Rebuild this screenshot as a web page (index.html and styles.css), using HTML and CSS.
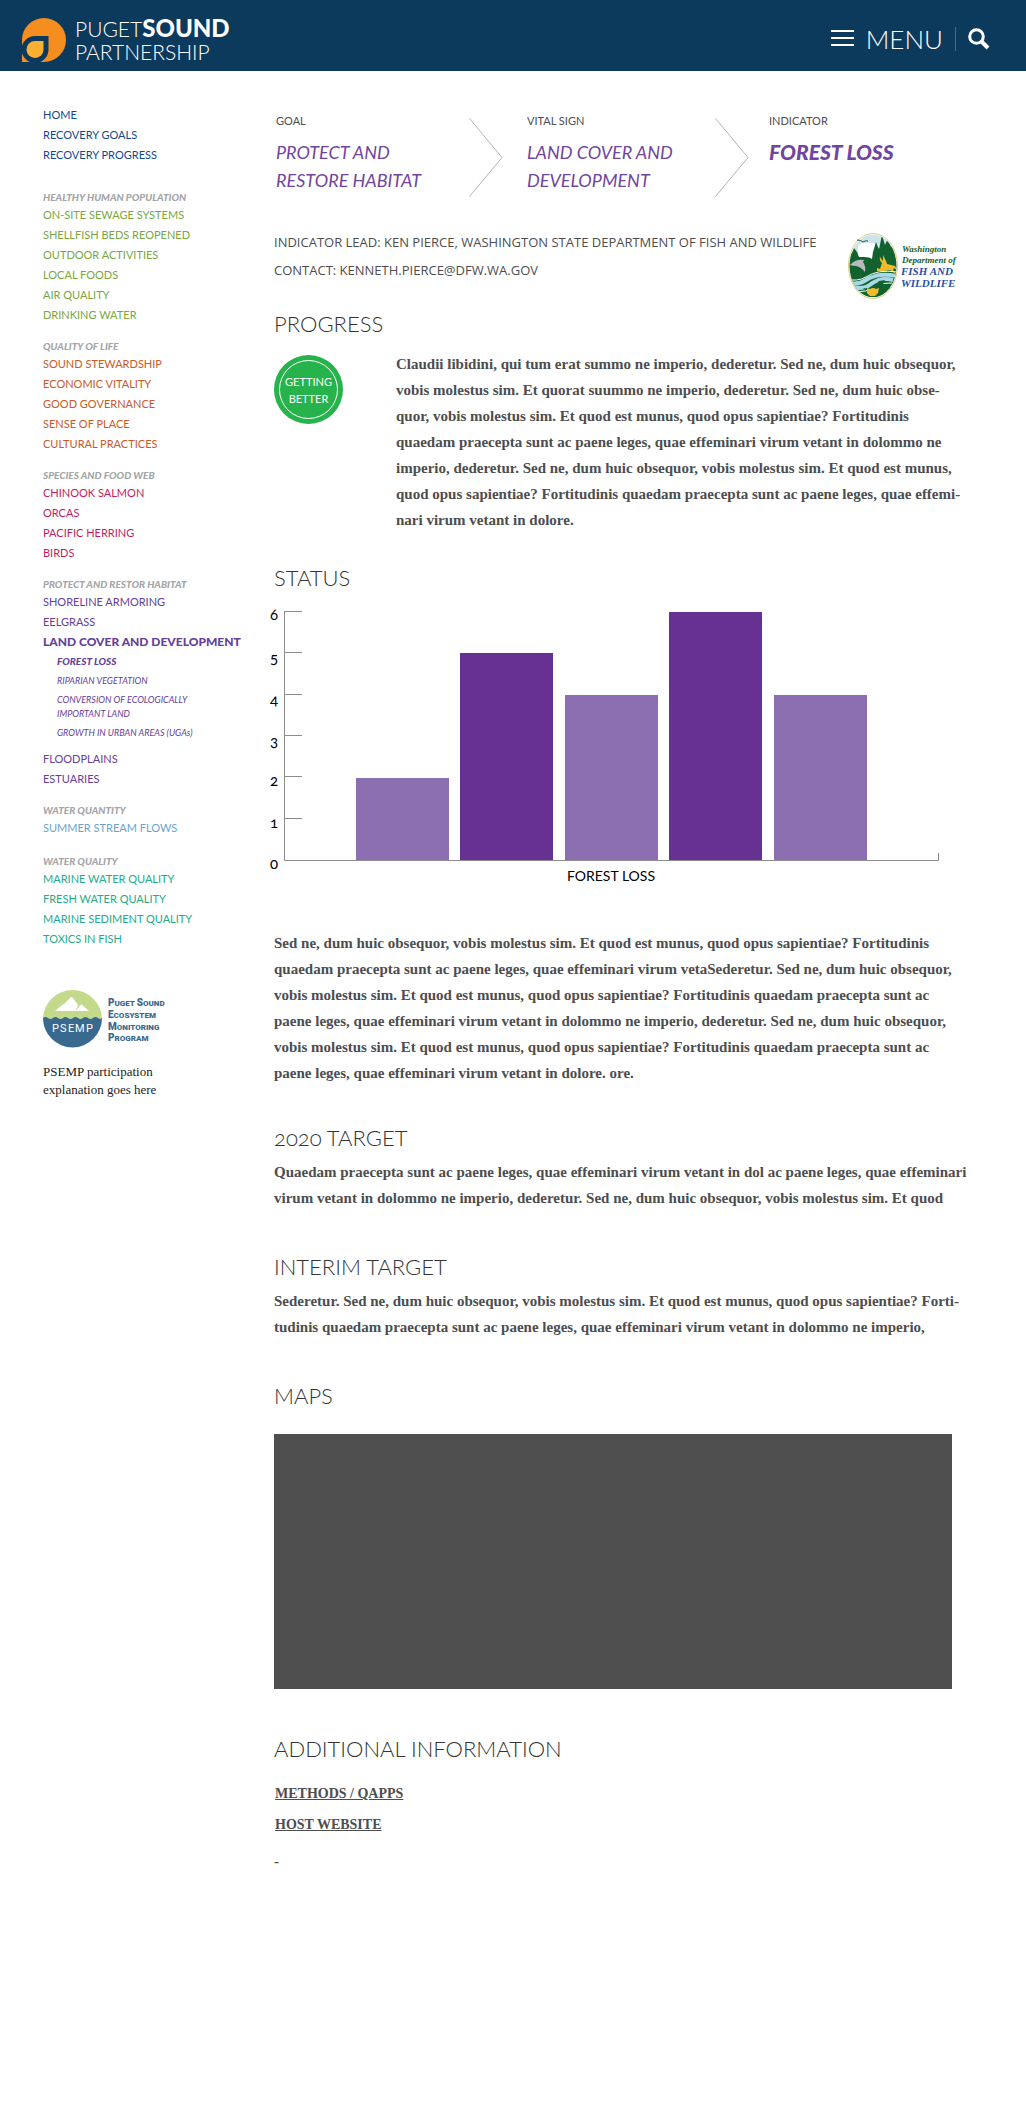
FILE: index.html
```
<!DOCTYPE html>
<html lang="en">
<head>
<meta charset="utf-8">
<meta name="viewport" content="width=device-width, initial-scale=1">
<title>Forest Loss – Puget Sound Partnership</title>
<link rel="stylesheet" href="styles.css">
</head>
<body>
<header class="site-header">
  <a class="brand" href="#">
    <svg class="brand-mark" width="44" height="44" viewBox="0 0 44 44" aria-hidden="true">
      <path fill="#f68d1f" d="M0 44V22A22 22 0 1 1 22 44Z"/>
      <path fill="#0c3a5c" d="M26.500 18V31.500A13.500 13.500 0 1 1 13 18Z"/>
      <path fill="#fbb034" d="M21.500 23V31.500A8.500 8.500 0 1 1 13 23Z"/>
    </svg>
    <span class="brand-name">PUGET<b>SOUND</b><br>PARTNERSHIP</span>
  </a>
  <div class="header-tools">
    <button class="menu-button" type="button">
      <svg width="23" height="17" viewBox="0 0 23 17" aria-hidden="true"><path d="M0 1h23M0 8h23M0 15h23" stroke="#fff" stroke-width="2"/></svg>
      MENU
    </button>
    <button class="search-button" type="button" aria-label="Search">
      <svg width="22" height="22" viewBox="0 0 22 22" fill="none" stroke="#fff" aria-hidden="true"><circle cx="8.500" cy="8.500" r="6.800" stroke-width="3"/><path d="M13.500 13.500L20 20" stroke-width="4"/></svg>
    </button>
  </div>
</header>

<div class="page">
  <nav class="sidebar" aria-label="Vital signs">
    <ul class="group blue">
      <li><a href="#">HOME</a></li>
      <li><a href="#">RECOVERY GOALS</a></li>
      <li><a href="#">RECOVERY PROGRESS</a></li>
    </ul>
    <h2 class="group-title first">HEALTHY HUMAN POPULATION</h2>
    <ul class="group green">
      <li><a href="#">ON-SITE SEWAGE SYSTEMS</a></li>
      <li><a href="#">SHELLFISH BEDS REOPENED</a></li>
      <li><a href="#">OUTDOOR ACTIVITIES</a></li>
      <li><a href="#">LOCAL FOODS</a></li>
      <li><a href="#">AIR QUALITY</a></li>
      <li><a href="#">DRINKING WATER</a></li>
    </ul>
    <h2 class="group-title">QUALITY OF LIFE</h2>
    <ul class="group orange">
      <li><a href="#">SOUND STEWARDSHIP</a></li>
      <li><a href="#">ECONOMIC VITALITY</a></li>
      <li><a href="#">GOOD GOVERNANCE</a></li>
      <li><a href="#">SENSE OF PLACE</a></li>
      <li><a href="#">CULTURAL PRACTICES</a></li>
    </ul>
    <h2 class="group-title">SPECIES AND FOOD WEB</h2>
    <ul class="group magenta">
      <li><a href="#">CHINOOK SALMON</a></li>
      <li><a href="#">ORCAS</a></li>
      <li><a href="#">PACIFIC HERRING</a></li>
      <li><a href="#">BIRDS</a></li>
    </ul>
    <h2 class="group-title">PROTECT AND RESTOR HABITAT</h2>
    <ul class="group purple">
      <li><a href="#">SHORELINE ARMORING</a></li>
      <li><a href="#">EELGRASS</a></li>
      <li><a class="current" href="#">LAND COVER AND DEVELOPMENT</a>
        <ul class="subgroup">
          <li><a class="current-sub" href="#" aria-current="page">FOREST LOSS</a></li>
          <li><a href="#">RIPARIAN VEGETATION</a></li>
          <li><a href="#">CONVERSION OF ECOLOGICALLY<br>IMPORTANT LAND</a></li>
          <li><a href="#">GROWTH IN URBAN AREAS (UGAs)</a></li>
        </ul>
      </li>
      <li><a href="#">FLOODPLAINS</a></li>
      <li><a href="#">ESTUARIES</a></li>
    </ul>
    <h2 class="group-title">WATER QUANTITY</h2>
    <ul class="group sky">
      <li><a href="#">SUMMER STREAM FLOWS</a></li>
    </ul>
    <h2 class="group-title water">WATER QUALITY</h2>
    <ul class="group teal">
      <li><a href="#">MARINE WATER QUALITY</a></li>
      <li><a href="#">FRESH WATER QUALITY</a></li>
      <li><a href="#">MARINE SEDIMENT QUALITY</a></li>
      <li><a href="#">TOXICS IN FISH</a></li>
    </ul>
    <svg class="psemp-logo" width="130" height="59" viewBox="0 0 130 59" role="img" aria-label="Puget Sound Ecosystem Monitoring Program">
      <path fill="#c3d98b" d="M0 29.500a29.500 29.500 0 0 1 59 0Z"/>
      <path fill="#39698f" d="M0 28q2.500-2 5 0t5 0 5 0 5 0 5 0 5 0 5 0 5 0 5 0 5 0 5 0 4 0A29.500 29.500 0 0 1 0 28Z"/>
      <path fill="#fff" d="M12 21l7-6 2-1 7-7 2 1 5 7-2 4 5-5 8 7Z"/>
      <path d="M33 20l5-6" stroke="#c3d98b"/>
      <g class="psemp-initials"><text x="9" y="42">P</text><text x="17" y="42">S</text><text x="25" y="42">E</text><text x="32" y="42">M</text><text x="43" y="42">P</text></g>
      <g class="psemp-name">
        <text x="65" y="16"><tspan class="cap">P</tspan>UGET <tspan class="cap">S</tspan>OUND</text>
        <text x="65" y="28"><tspan class="cap">E</tspan>COSYSTEM</text>
        <text x="65" y="40"><tspan class="cap">M</tspan>ONITORING</text>
        <text x="65" y="51"><tspan class="cap">P</tspan>ROGRAM</text>
      </g>
    </svg>
    <p class="psemp-note">PSEMP participation<br>explanation goes here</p>
  </nav>

  <main class="content">
    <div class="trail">
      <div class="trail-step goal"><span class="trail-label">GOAL</span><a class="trail-title" href="#">PROTECT AND<br>RESTORE HABITAT</a></div>
      <svg class="chevron" width="34" height="79" viewBox="0 0 34 79" aria-hidden="true"><path d="M.5.500l32.500 39-32.500 39" fill="none" stroke="#b5b5b5"/></svg>
      <div class="trail-step sign"><span class="trail-label">VITAL SIGN</span><a class="trail-title" href="#">LAND COVER AND<br>DEVELOPMENT</a></div>
      <svg class="chevron" width="34" height="79" viewBox="0 0 34 79" aria-hidden="true"><path d="M.5.500l32.500 39-32.500 39" fill="none" stroke="#b5b5b5"/></svg>
      <div class="trail-step"><span class="trail-label">INDICATOR</span><h1 class="trail-title strong">FOREST LOSS</h1></div>
    </div>

    <div class="lead">
      <p>INDICATOR LEAD: KEN PIERCE, WASHINGTON STATE DEPARTMENT OF FISH AND WILDLIFE<br>CONTACT: KENNETH.PIERCE@DFW.WA.GOV</p>
      <svg class="wdfw" width="114" height="66" viewBox="0 0 114 66" role="img" aria-label="Washington Department of Fish and Wildlife">
        <defs><clipPath id="seal"><ellipse cx="25" cy="33" rx="23.500" ry="31.500"/></clipPath></defs>
        <ellipse cx="25" cy="33" rx="24.500" ry="32.500" fill="#fff" stroke="#d9cf86"/>
        <g clip-path="url(#seal)">
          <path fill="#cfe4ea" d="M0 0h50v22H0z"/>
          <path fill="#fff" d="M10 13q5-4 14-3 8 0 8 6v10H10z"/>
          <path fill="#12622f" d="M0 22l4-2 2-5 3 4 2 5 5 0q6 0 8 2l1-7 3-10 3 7 3-14 3 10 3-7 3 9 2-4 5 6v48H0z"/>
          <path fill="#b9babd" d="M2 32q5-6 14-5l-1 2q3 4 2 10-4-5-9-6-3 0-6-1z"/>
          <path fill="#f2bb2c" d="M29 35l3 1 2-6q-3-3-2-6l3 4 0-6 3 6 1 3 8 2 3 5-4-3-1 2 3 4-6-4-6 1-7 0z"/>
          <path fill="none" stroke="#a9d9e6" stroke-width="4" d="M-2 49q11 4 20-2 12-8 31-4M3 54q13 3 20-3 10-7 22-4"/>
          <path fill="none" stroke="#fff" d="M-2 46q11 3 20-2 12-8 31-5M6 58q13 2 20-4 8-5 18-4"/>
          <path fill="#12622f" d="M14 55q10 2 17-7l6-1q-4 10-10 13z"/>
          <path fill="#f2bb2c" d="M19 55l3 1q3-2 6 0l3-1-1 5-3 3h-5l-3-3z"/>
        </g>
        <path d="M9 7q4 0 6 2 3-2 5-1" fill="none" stroke="#2a4d5c"/>
        <g class="wdfw-name"><text x="54" y="19">Washington</text><text x="54" y="30">Department of</text></g>
        <g class="wdfw-strong"><text x="53" y="42">FISH AND</text><text x="53" y="54">WILDLIFE</text></g>
      </svg>
    </div>

    <section class="progress">
      <h2>PROGRESS</h2>
      <div class="progress-row">
        <div class="badge"><span>GETTING<br>BETTER</span></div>
        <p>Claudii libidini, qui tum erat summo ne imperio, dederetur. Sed ne, dum huic obsequor,<br>vobis molestus sim. Et quorat suummo ne imperio, dederetur. Sed ne, dum huic obse-<br>quor, vobis molestus sim. Et quod est munus, quod opus sapientiae? Fortitudinis<br>quaedam praecepta sunt ac paene leges, quae effeminari virum vetant in dolommo ne<br>imperio, dederetur. Sed ne, dum huic obsequor, vobis molestus sim. Et quod est munus,<br>quod opus sapientiae? Fortitudinis quaedam praecepta sunt ac paene leges, quae effemi-<br>nari virum vetant in dolore.</p>
      </div>
    </section>

    <section class="status">
      <h2>STATUS</h2>
      <svg class="chart" width="666" height="280" viewBox="0 0 666 280" role="img" aria-label="Forest loss: 2, 5, 4, 6, 4">
        <path fill="none" stroke="#8c8c8c" d="M10.500 7V256.500H664.500V249M11 7.500h17M11 48.500h17M11 90.500h17M11 131.500h17M11 172.500h17M11 214.500h17"/>
        <g fill="#8c6fb0"><rect x="82" y="174" width="93" height="82"/><rect x="291" y="91" width="93" height="165"/><rect x="500" y="91" width="93" height="165"/></g>
        <g fill="#663192"><rect x="186" y="49" width="93" height="207"/><rect x="395" y="8" width="93" height="248"/></g>
        <g class="chart-ticks"><text x="0" y="16">6</text><text x="0" y="59">5</text><text x="0" y="101">4</text><text x="0" y="142">3</text><text x="0" y="182">2</text><text x="0" y="224">1</text><text x="0" y="265">0</text></g>
        <text class="chart-label" x="337" y="277">FOREST LOSS</text>
      </svg>
      <p>Sed ne, dum huic obsequor, vobis molestus sim. Et quod est munus, quod opus sapientiae? Fortitudinis<br>quaedam praecepta sunt ac paene leges, quae effeminari virum vetaSederetur. Sed ne, dum huic obsequor,<br>vobis molestus sim. Et quod est munus, quod opus sapientiae? Fortitudinis quaedam praecepta sunt ac<br>paene leges, quae effeminari virum vetant in dolommo ne imperio, dederetur. Sed ne, dum huic obsequor,<br>vobis molestus sim. Et quod est munus, quod opus sapientiae? Fortitudinis quaedam praecepta sunt ac<br>paene leges, quae effeminari virum vetant in dolore. ore.</p>
    </section>

    <section class="target">
      <h2>2020 TARGET</h2>
      <p>Quaedam praecepta sunt ac paene leges, quae effeminari virum vetant in dol ac paene leges, quae effeminari<br>virum vetant in dolommo ne imperio, dederetur. Sed ne, dum huic obsequor, vobis molestus sim. Et quod</p>
    </section>

    <section class="target">
      <h2>INTERIM TARGET</h2>
      <p>Sederetur. Sed ne, dum huic obsequor, vobis molestus sim. Et quod est munus, quod opus sapientiae? Forti-<br>tudinis quaedam praecepta sunt ac paene leges, quae effeminari virum vetant in dolommo ne imperio,</p>
    </section>

    <section class="maps">
      <h2>MAPS</h2>
      <div class="map"></div>
    </section>

    <section class="more">
      <h2>ADDITIONAL INFORMATION</h2>
      <ul class="links">
        <li><a href="#">METHODS / QAPPS</a></li>
        <li><a href="#">HOST WEBSITE</a></li>
      </ul>
      <p class="dash">-</p>
    </section>
  </main>
</div>
</body>
</html>
```
FILE: styles.css
```
* { box-sizing: border-box; }

body {
  margin: 0;
  background: #fff;
  color: #4d4d4f;
  font-family: Lato, "Open Sans", sans-serif;
}

h1, h2, p, ul { margin: 0; padding: 0; }
ul { list-style: none; }
a { color: inherit; text-decoration: none; }
svg { display: block; flex: none; }
button { padding: 0; border: 0; background: none; color: inherit; font: inherit; cursor: pointer; }

/* Header */
.site-header {
  display: flex;
  justify-content: space-between;
  align-items: center;
  min-height: 71px;
  padding: 8px 36px 0 22px;
  background: #0c3a5c;
  color: #fff;
}
.brand { display: flex; align-items: center; gap: 9px; }
.brand-name { font-size: 21px; font-weight: 300; line-height: 23px; }
.brand-name b { font-size: 24px; font-weight: 900; line-height: 20px; }
.header-tools { display: flex; align-items: center; padding-bottom: 2px; }
.menu-button {
  display: flex;
  align-items: center;
  gap: 12px;
  padding-right: 12px;
  font-size: 26px;
  font-weight: 300;
  line-height: 24px;
}
.search-button { padding: 1px 0 1px 12px; border-left: 1px solid #486b85; }

/* Page columns */
.page {
  display: grid;
  grid-template-columns: 231px minmax(0, 1fr);
  padding: 0 56px 48px 43px;
}

/* Sidebar */
.sidebar { padding-top: 34px; }
.group { font-size: 11px; line-height: 20px; }
.group-title {
  margin-top: 13px;
  color: #a3a5a8;
  font-size: 10px;
  font-style: italic;
  font-weight: 900;
  line-height: 16px;
}
.group-title.first { margin-top: 24px; }
.group-title.water { margin-top: 15px; }
.blue { color: #0f4a8f; }
.green { color: #77a840; }
.orange { color: #cb5a26; }
.magenta { color: #c01e63; }
.purple { color: #66409a; }
.sky { color: #6ba3d0; }
.teal { color: #25ab8b; }
.current { font-size: 12px; font-weight: 900; }
.subgroup {
  display: grid;
  gap: 5px;
  padding: 2px 0 9px 14px;
  font-size: 9px;
  font-style: italic;
  line-height: 14px;
}
.current-sub { font-size: 10px; font-weight: 900; }
.psemp-logo { margin-top: 41px; }
.psemp-initials { fill: #fff; font: 11px Roboto, sans-serif; }
.psemp-name { fill: #39698f; font: 900 8px Roboto, sans-serif; }
.psemp-name .cap { font-size: 10px; }
.psemp-note {
  margin-top: 14px;
  font: 13px/18px "Liberation Serif", serif;
  color: #222;
}

/* Breadcrumb trail */
.content { padding-top: 42px; }
.trail { display: flex; padding-left: 2px; }
.trail-step { display: flex; flex-direction: column; gap: 9px; }
.goal { width: 193px; }
.sign { width: 188px; }
.chevron { margin: 5px 24px 0 0; }
.trail-step:last-child { margin-left: -4px; }
.trail-label { font-size: 11px; line-height: 16px; }
.trail-title {
  color: #7045a0;
  font-size: 18px;
  font-style: italic;
  font-weight: 400;
  line-height: 28px;
}
.trail-title.strong { font-size: 21px; font-weight: 900; }

/* Indicator lead */
.lead {
  display: flex;
  justify-content: space-between;
  margin-top: 31px;
  padding-right: 8px;
}
.lead p { font: 13px/28px "Open Sans", Lato, sans-serif; }
.wdfw { margin-top: 5px; }
.wdfw-name { fill: #12622f; font: italic bold 9px "Liberation Serif", serif; }
.wdfw-strong { fill: #2b4fa8; font: italic bold 11px "Liberation Serif", serif; }

/* Sections */
section h2 {
  color: #333;
  font-size: 22px;
  font-weight: 300;
  font-variant-numeric: oldstyle-nums;
  line-height: 28px;
}
section p { font: bold 15px/26px "Liberation Serif", serif; }

.progress { margin-top: 11px; }
.progress-row {
  display: grid;
  grid-template-columns: 122px minmax(0, 1fr);
  margin-top: 13px;
}
.badge {
  display: flex;
  width: 69px;
  height: 69px;
  margin-top: 4px;
  padding: 5px;
  border-radius: 50%;
  background: #27b34b;
}
.badge span {
  flex: 1;
  padding-top: 12px;
  border: 1px solid #fff;
  border-radius: 50%;
  color: #fff;
  font-size: 11px;
  line-height: 17px;
  text-align: center;
}

.status { margin-top: 31px; }
.chart { max-width: 100%; margin: 12px 0 46px; overflow: visible; }
.chart-ticks, .chart-label { fill: #000; text-anchor: middle; }
.chart-ticks { font-size: 15px; font-variant-numeric: oldstyle-nums; }
.chart-label { font-size: 14px; }

.status + .target { margin-top: 38px; }
.target { margin-top: 42px; }
.target p { margin-top: 7px; }

.maps { margin-top: 42px; }
.map { height: 255px; margin: 24px 18px 0 0; background: #4f4f4f; }

.more { margin-top: 46px; }
.links {
  margin-top: 15px;
  padding-left: 1px;
  font: bold 14px/31px "Liberation Serif", serif;
}
.links a { text-decoration: underline; }
.dash { margin-top: 8px; }
```
